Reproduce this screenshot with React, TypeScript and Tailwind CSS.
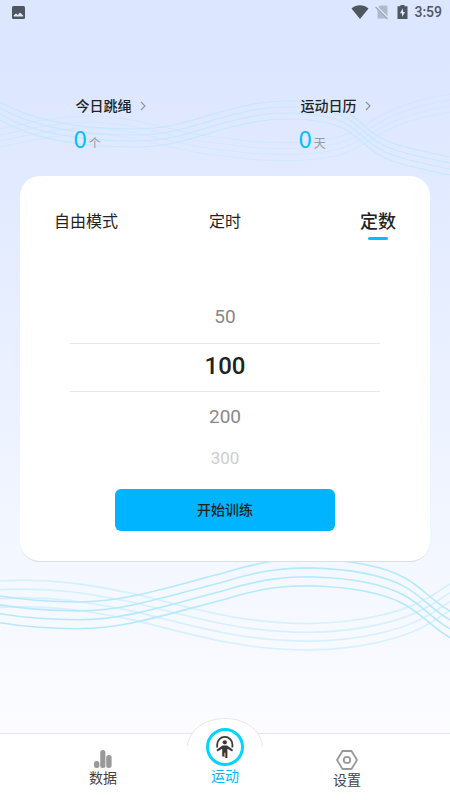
import { useState } from "react";

const modes = ["自由模式", "定时", "定数"];
const counts = [50, 100, 200, 300];
const rowStyles = [
  "h-[52px] text-[19px] text-[#888888]",
  "h-[49px] border-y border-[#e8e8e8] pb-1 text-2xl font-medium text-[#222222]",
  "h-[50px] text-[19px] text-[#888888]",
  "h-[34px] text-[17px] text-[#cccccc]",
];

function Waves() {
  const offsets = [0, 1, 2, 3];
  return (
    <svg
      className="absolute inset-x-0 top-0 h-[800px] w-full"
      viewBox="0 0 450 800"
      preserveAspectRatio="none"
      fill="none"
      aria-hidden="true"
    >
      {offsets.map((n) => (
        <g key={n} stroke="#bfe7ff" strokeWidth="1.2">
          <path
            opacity="0.4"
            d="M0 129C25 124 50 117 84 116C145 116 170 134 225 138C265 144 300 145 335 138C370 130 375 106 450 94"
            transform={`translate(0 ${n * 6})`}
          />
          <path
            opacity="0.8"
            d="M0 102C35 122 80 129 135 129C180 129 205 114 240 107C270 99 310 99 335 107C360 115 365 134 395 144C412 149 430 153 450 157"
            transform={`translate(0 ${n * 6})`}
          />
        </g>
      ))}
      {offsets.map((n) => (
        <g key={n} stroke="#b4e9ff" strokeWidth="1.6">
          <path
            opacity="0.5"
            d="M0 581C55 578 90 585 130 593C180 604 235 624 310 623.5C360 623 400 612 420 602C435 595 440 590 450 584"
            transform={`translate(0 ${n * 8.8})`}
          />
          <path
            d="M0 596C25 600 50 602 78 602C125 602 165 588 225 572.5C265 560 290 559 310 559C345 560 380 564 405 578C423 588 432 601 450 611"
            transform={`translate(0 ${n * 8.9})`}
          />
        </g>
      ))}
    </svg>
  );
}

function StatusBar() {
  return (
    <div className="flex h-6 items-center justify-between pl-3 pr-2 text-[#50565f]">
      <svg width="13" height="13" viewBox="0 0 13 13" aria-hidden="true">
        <rect width="13" height="13" rx="1.5" fill="currentColor" />
        <path d="M1.8 10.5V9.2L4 7.4L5.8 9L8 6.6L11.2 9.6V10.5Z" fill="#dfe8ff" />
      </svg>
      <div className="flex items-center">
        <svg width="18" height="14" viewBox="0 0 18 14" aria-hidden="true">
          <path d="M0.5 3.5C5.5 -0.8 12.5 -0.8 17.5 3.5L9 14Z" fill="currentColor" />
        </svg>
        <svg className="ml-1.5" width="14" height="14" viewBox="0 0 14 14" aria-hidden="true">
          <path d="M5 0.5H11.5Q12.5 0.5 12.5 1.5V13.5H2.5V3Z" fill="#b1bac9" />
          <path d="M0 0.8L13.5 14" stroke="#dfe8ff" strokeWidth="2.6" />
          <path d="M0.5 2L12.5 14" stroke="#9aa3b1" strokeWidth="1.2" />
        </svg>
        <svg className="ml-2" width="11" height="14" viewBox="0 0 11 14" aria-hidden="true">
          <path d="M3.5 0H7.5V1.3H10.5V14H0.5V1.3H3.5Z" fill="currentColor" />
          <path d="M6 3.2L2.9 8.2H5V12L8.1 7H6Z" fill="#dfe8ff" />
        </svg>
        <span className="ml-1.5 text-sm font-medium">3:59</span>
      </div>
    </div>
  );
}

function Stat({ title, value, unit }: { title: string; value: number; unit: string }) {
  return (
    <div className="flex justify-center">
      <button className="w-[74px] text-left">
        <span className="flex h-5 items-center justify-between text-sm font-medium text-[#1c2422]">
          {title}
          <svg width="12" height="10" viewBox="0 0 12 10" fill="none" aria-hidden="true">
            <path d="M3 1L7 5L3 9" stroke="#8d9298" strokeWidth="1.1" />
          </svg>
        </span>
        <span className="-ml-0.5 mt-1.5 flex h-8 items-baseline gap-0.5 font-['Noto_Sans_CJK_SC',sans-serif] text-2xl text-[#04bfff]">
          {value}
          <span className="text-xs text-[#9a9a9a]">{unit}</span>
        </span>
      </button>
    </div>
  );
}

function BottomNav() {
  return (
    <nav className="relative grid h-[67px] grid-cols-3 border-t border-[#e4e4ea] bg-white px-[42px] text-sm text-[#444444]">
      <svg
        className="absolute -top-4 left-1/2 -translate-x-1/2"
        width="76"
        height="36"
        viewBox="0 0 76 36"
        aria-hidden="true"
      >
        <path d="M0.5 30V26C3 12 18 0.5 38 0.5S73 12 75.5 26V30V36H0.5Z" fill="#ffffff" />
        <path d="M0.5 28C2 12 18 0.5 38 0.5S74 12 75.5 28" fill="none" stroke="#e6e6ea" />
      </svg>
      <a href="#data" className="flex flex-col items-center pt-4">
        <svg width="18" height="18" viewBox="0 0 18 18" fill="#999999" aria-hidden="true">
          <rect x="0" y="11" width="5.4" height="7" rx="2.5" />
          <rect x="6.2" y="0" width="5.2" height="18" rx="2.5" />
          <rect x="12.2" y="5" width="5.4" height="13" rx="2.5" />
        </svg>
        <span>数据</span>
      </a>
      <a href="#sport" className="relative -mt-1.5 flex flex-col items-center text-[#04b6ff]">
        <svg width="38" height="38" viewBox="0 0 38 38" fill="none" aria-hidden="true">
          <circle cx="19" cy="19" r="17.5" fill="#ffffff" stroke="#04d4ff" strokeWidth="3" />
          <path
            d="M11.2 19.5V16.5A7.6 7.6 0 0 1 26.4 16.5V19.5"
            stroke="#3b3735"
            strokeWidth="1.8"
          />
          <circle cx="18.8" cy="14.3" r="2.1" fill="#3b3735" />
          <path
            d="M16.5 17.6H21L27 21.8L26.2 23.4L21.4 20.8V30H19.3V25H18.4V28.5H16.2V20.8L11.4 23.4L10.6 21.8Z"
            fill="#3b3735"
          />
          <path d="M18.6 24.5V29" stroke="#b98f7c" strokeWidth="0.8" />
        </svg>
        <span>运动</span>
      </a>
      <a href="#settings" className="flex flex-col items-center pt-4">
        <svg width="22" height="20" viewBox="0 0 22 20" fill="none" stroke="#999999" aria-hidden="true">
          <path d="M6.5 1H15.5L21 10L15.5 19H6.5L1 10Z" strokeWidth="1.8" strokeLinejoin="round" />
          <circle cx="11" cy="10" r="3.2" strokeWidth="1.8" />
        </svg>
        <span>设置</span>
      </a>
    </nav>
  );
}

export default function App() {
  const [mode, setMode] = useState("定数");

  return (
    <div className="relative flex min-h-screen flex-col bg-[linear-gradient(#dce6ff_8%,#e4ecff_30%,#f3f7ff_70%,#fcfcff_92%)] font-[Roboto,'Noto_Sans_CJK_SC',sans-serif]">
      <Waves />
      <div className="relative flex flex-1 flex-col">
        <StatusBar />
        <header className="mt-[72px] grid grid-cols-2">
          <Stat title="今日跳绳" value={0} unit="个" />
          <Stat title="运动日历" value={0} unit="天" />
        </header>
        <main className="mx-5 mt-[22px] flex-none rounded-[20px] border-b border-[#dcdfe5] bg-white pb-[30px] pt-8">
          <div className="grid grid-cols-3 px-[34px]">
            {modes.map((item) => (
              <button
                key={item}
                onClick={() => setMode(item)}
                className={`flex flex-col items-center first:justify-self-start last:justify-self-end ${
                  mode === item ? "text-lg font-medium" : "text-base"
                } text-[#1f2423]`}
              >
                <span className="h-[29px] leading-7">{item}</span>
                {mode === item && <span className="h-[3px] w-5 rounded-full bg-[#04bfff]" />}
              </button>
            ))}
          </div>
          <div className="mx-[50px] mt-[51px] flex flex-col">
            {counts.map((count, i) => (
              <button key={count} className={`flex items-center justify-center ${rowStyles[i]}`}>
                {count}
              </button>
            ))}
          </div>
          <div className="mt-[13px] flex justify-center">
            <button className="h-[42px] w-[220px] rounded-md bg-[#00b4ff] text-sm font-medium text-[#222222]">
              开始训练
            </button>
          </div>
        </main>
        <div className="mt-auto">
          <BottomNav />
        </div>
      </div>
    </div>
  );
}
